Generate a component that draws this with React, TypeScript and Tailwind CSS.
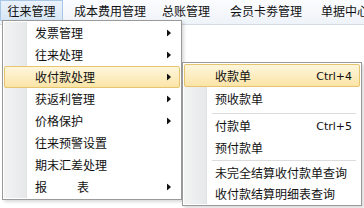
import React from "react";

const font = { fontFamily: '"Noto Sans CJK SC", "Noto Sans", sans-serif' };

function Arrow() {
  return (
    <svg width="4" height="7" viewBox="0 0 4 7" className="absolute right-[9px] top-1/2 -translate-y-1/2">
      <path d="M0 0 L4 3.5 L0 7 Z" fill="#111" />
    </svg>
  );
}

function Item({ label, arrow, active, shortcut, h = 22 }: { label: React.ReactNode; arrow?: boolean; active?: boolean; shortcut?: string; h?: number }) {
  return (
    <div className="relative flex items-center" style={{ height: h }}>
      {active && (
        <div className="absolute inset-x-0 top-0 bottom-0 rounded-[2px] border border-[#e6c56e] bg-gradient-to-b from-[#fef6dc] to-[#fbe4a6]" />
      )}
      <div className="relative whitespace-nowrap pl-[31px] text-[12px] leading-none text-[#111]">{label}</div>
      {shortcut && (
        <div className="absolute right-[8px] top-1/2 -translate-y-1/2 text-[11px] leading-none text-[#111]" style={{ fontFamily: '"DejaVu Sans", sans-serif' }}>
          {shortcut}
        </div>
      )}
      {arrow && <Arrow />}
    </div>
  );
}

function Sep() {
  return (
    <div className="relative flex h-[4px] items-center">
      <div className="ml-[28px] mr-[4px] h-px w-full bg-[#dcdcdc]" />
    </div>
  );
}

function Gutter() {
  return (
    <>
      <div className="absolute bottom-px left-px top-px w-[23px] border-r border-[#e2e3e3] bg-gradient-to-r from-[#f3f3f3] to-[#e6e8ea]" />
      <div className="absolute bottom-px left-[25px] top-px w-px bg-white" />
    </>
  );
}

export default function App() {
  return (
    <div className="relative h-[208px] w-[364px] overflow-hidden bg-white" style={font}>
      <div className="flex h-[25px] items-start overflow-hidden whitespace-nowrap border-b border-[#d6dbe2] bg-gradient-to-b from-[#fbfcfe] to-[#eef3f9] text-[12px] text-[#111]">
        <div className="flex h-[21px] w-[63px] shrink-0 items-center justify-center border border-[#a9c6e4] bg-gradient-to-b from-[#eaf2fb] to-[#d7e6f5]">往来管理</div>
        <div className="ml-[11px] flex h-[21px] shrink-0 items-center">成本费用管理</div>
        <div className="ml-[16px] flex h-[21px] shrink-0 items-center">总账管理</div>
        <div className="ml-[20px] flex h-[21px] shrink-0 items-center">会员卡劵管理</div>
        <div className="ml-[19px] flex h-[21px] shrink-0 items-center">单据中心</div>
      </div>

      <div className="absolute left-[2px] top-[20px] w-[180px] border border-[#9a9a9a] bg-white p-px shadow-[2px_2px_3px_rgba(0,0,0,0.15)]">
        <Gutter />
        <div className="relative">
          <Item label="发票管理" arrow />
          <Item label="往来处理" arrow />
          <Item label="收付款处理" arrow active />
          <Item label="获返利管理" arrow />
          <Item label="价格保护" arrow />
          <Item label="往来预警设置" />
          <Item label="期末汇差处理" />
          <Item label={<span>报<span className="inline-block w-[30px]" />表</span>} arrow />
        </div>
      </div>

      <div className="absolute left-[182px] top-[62px] w-[180px] border border-[#9a9a9a] bg-white p-px shadow-[2px_2px_3px_rgba(0,0,0,0.15)]">
        <Gutter />
        <div className="relative">
          <Item label="收款单" shortcut="Ctrl+4" active h={23} />
          <Item label="预收款单" h={24} />
          <Sep />
          <Item label="付款单" shortcut="Ctrl+5" h={22} />
          <Item label="预付款单" h={21} />
          <Sep />
          <Item label="未完全结算收付款单查询" h={22} />
          <Item label="收付款结算明细表查询" h={20} />
        </div>
      </div>
    </div>
  );
}
